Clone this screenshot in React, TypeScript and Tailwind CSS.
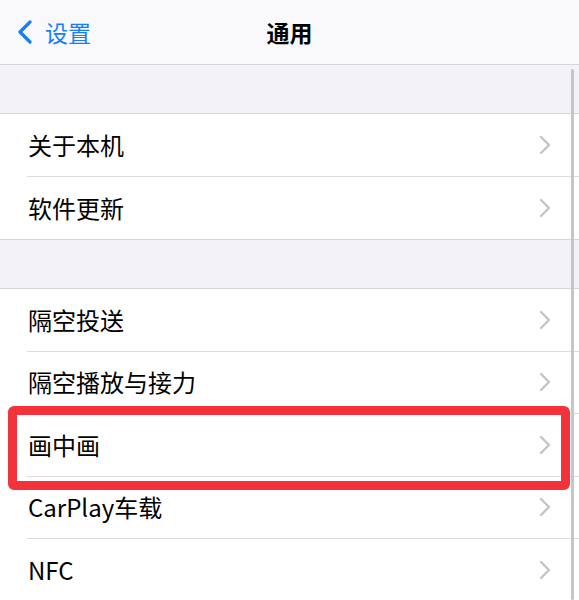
import React from "react";

const groups: string[][] = [
  ["关于本机", "软件更新"],
  ["隔空投送", "隔空播放与接力", "画中画", "CarPlay车载", "NFC"],
];

function Chevron() {
  return (
    <svg className="w-[12px] h-[20px]" viewBox="0 0 12 20" fill="none">
      <path d="M2 2l8 8-8 8" stroke="#c4c4c7" strokeWidth={2.4} strokeLinecap="round" strokeLinejoin="round" />
    </svg>
  );
}

function Row({ label, last }: { label: string; last: boolean }) {
  return (
    <div className="flex h-[62.5px] bg-white">
      <div className={`flex-1 flex items-center ml-[27px] pr-[28px] ${last ? "" : "border-b border-[#dcdce0]"}`}>
        <span className="flex-1 text-[24px] text-black leading-none pl-[1px]">{label}</span>
        <Chevron />
      </div>
    </div>
  );
}

export default function App() {
  return (
    <div
      className="relative w-[579px] h-[600px] overflow-hidden bg-[#f2f2f7]"
      style={{ fontFamily: '"Noto Sans CJK SC", "Noto Sans", sans-serif' }}
    >
      <div className="h-[65px] bg-[#f9f9fb] border-b border-[#d6d6da] grid grid-cols-3 items-center">
        <div className="flex items-center pl-[17px] gap-[12px] text-[#157efb]">
          <svg className="w-[16px] h-[24px]" viewBox="0 0 16 24" fill="none">
            <path d="M13 2L3 12l10 10" stroke="#157efb" strokeWidth={3.2} strokeLinecap="round" strokeLinejoin="round" />
          </svg>
          <span className="text-[23px] leading-none">设置</span>
        </div>
        <div className="text-center text-[23px] font-bold text-black leading-none">通用</div>
        <div />
      </div>
      {groups.map((g, gi) => (
        <div key={gi}>
          <div
            className={`bg-[#f2f2f7] border-b border-[#d6d6da] ${
              gi === 0 ? "h-[49px]" : "h-[50px] border-t"
            }`}
          />
          {g.map((label, i) => (
            <Row key={label} label={label} last={i === g.length - 1} />
          ))}
        </div>
      ))}
      <div className="absolute left-[571px] top-[69px] bottom-0 w-[3px] rounded-full bg-[#c6c6c8]" />
      <div className="absolute left-[8px] top-[406px] w-[562px] h-[84px] border-[9px] border-[#f3333c] rounded-[6px]" />
    </div>
  );
}
